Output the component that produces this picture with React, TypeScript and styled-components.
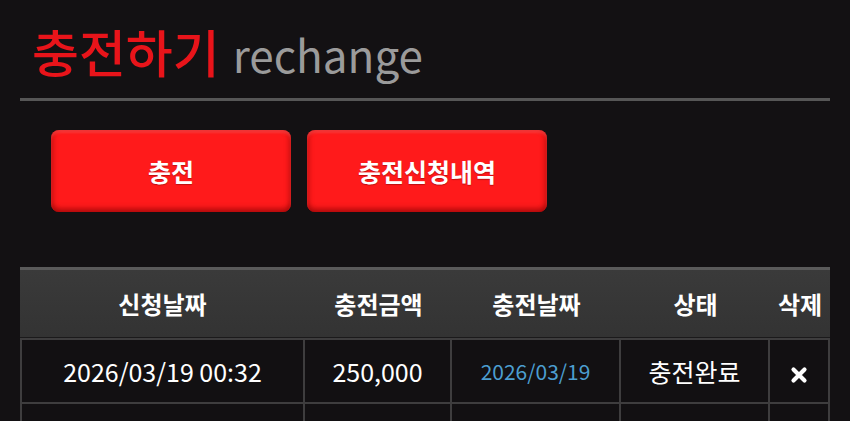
import React from 'react'
import styled, { createGlobalStyle } from 'styled-components'

interface ChargeRecord {
    requestedAt: string,
    amount: number,
    chargedAt: string,
    status: string,
}

const records: ChargeRecord[] = [
    { requestedAt: '2026/03/19 00:32', amount: 250000, chargedAt: '2026/03/19', status: '충전완료' },
]

// the list always shows at least this many rows, empty ones are left blank
const MIN_ROWS = 2

const columns = [
    { label: '신청날짜', width: 285 },
    { label: '충전금액', width: 147 },
    { label: '충전날짜', width: 169 },
    { label: '상태', width: 149 },
    { label: '삭제', width: 60 },
]

const formatAmount = (n: number) => n.toLocaleString('en-US')

const DeleteIcon: React.FC = () => (
    <svg width="18" height="18" viewBox="0 0 18 18">
        <path d="M3.5 3.5 L14.5 14.5 M14.5 3.5 L3.5 14.5" stroke="#fff" strokeWidth="4.2" strokeLinecap="round" />
    </svg>
)

const App: React.FC = () => {
    const blankRows = Math.max(0, MIN_ROWS - records.length)

    return (
        <>
            <GlobalStyle />
            <StyledPage>
                <StyledTitleBar>
                    <StyledTitle>충전하기</StyledTitle>
                    <StyledSubtitle>rechange</StyledSubtitle>
                </StyledTitleBar>

                <StyledButtonRow>
                    <StyledTabButton>충전</StyledTabButton>
                    <StyledTabButton>충전신청내역</StyledTabButton>
                </StyledButtonRow>

                <StyledTable>
                    <colgroup>
                        {columns.map((c) => (
                            <col key={c.label} style={{ width: c.width }} />
                        ))}
                    </colgroup>
                    <thead>
                        <tr>
                            {columns.map((c) => (
                                <StyledHeadCell key={c.label}>{c.label}</StyledHeadCell>
                            ))}
                        </tr>
                    </thead>
                    <tbody>
                        {records.map((r) => (
                            <tr key={r.requestedAt}>
                                <StyledCell>{r.requestedAt}</StyledCell>
                                <StyledCell>{formatAmount(r.amount)}</StyledCell>
                                <StyledCell $tone="date">{r.chargedAt}</StyledCell>
                                <StyledCell>{r.status}</StyledCell>
                                <StyledCell>
                                    <StyledDeleteButton type="button" aria-label="삭제">
                                        <DeleteIcon />
                                    </StyledDeleteButton>
                                </StyledCell>
                            </tr>
                        ))}
                        {Array.from({ length: blankRows }).map((_, i) => (
                            <tr key={`blank-${i}`}>
                                {columns.map((c) => (
                                    <StyledCell key={c.label} />
                                ))}
                            </tr>
                        ))}
                    </tbody>
                </StyledTable>
            </StyledPage>
        </>
    )
}

const GlobalStyle = createGlobalStyle`
    html, body {
        margin: 0;
        padding: 0;
        background: #131113;
        font-family: "Noto Sans CJK KR", "Noto Sans", sans-serif;
        overflow: hidden;
    }
`

const StyledPage = styled.div`
    width: 810px;
    padding: 0 20px;
`

const StyledTitleBar = styled.div`
    display: flex;
    align-items: baseline;
    height: 101px;
    padding-top: 17px;
    padding-left: 12px;
    box-sizing: border-box;
    border-bottom: 3px solid #565656;
`

const StyledTitle = styled.h1`
    margin: 0;
    font-size: 51px;
    line-height: 68px;
    font-weight: 500;
    color: #e8141a;
`

const StyledSubtitle = styled.span`
    margin-left: 13px;
    font-size: 44px;
    font-weight: 400;
    color: #9b9b9b;
`

const StyledButtonRow = styled.div`
    display: flex;
    gap: 16px;
    margin-top: 29px;
    padding-left: 31px;
`

const StyledTabButton = styled.button`
    width: 240px;
    height: 82px;
    border: none;
    border-radius: 8px;
    background: #ff1a1b;
    box-shadow:
        inset 0 3px 3px rgba(255, 120, 120, 0.35),
        inset 0 -4px 5px rgba(120, 0, 0, 0.45),
        inset 3px 0 4px rgba(140, 0, 0, 0.25),
        inset -3px 0 4px rgba(140, 0, 0, 0.25);
    color: #fff;
    font-family: inherit;
    font-size: 25px;
    font-weight: 700;
    text-shadow: 0 1px 1px rgba(90, 0, 0, 0.4);
    cursor: pointer;
`

const StyledTable = styled.table`
    margin-top: 55px;
    width: 810px;
    table-layout: fixed;
    border-collapse: separate;
    border-spacing: 0;
`

const StyledHeadCell = styled.th`
    height: 67px;
    padding: 0;
    background: linear-gradient(#3a3a3a, #333333);
    border-top: 3px solid #5a5a5a;
    border-bottom: 1px solid #1b1a1b;
    color: #fff;
    font-size: 24px;
    font-weight: 700;
    text-align: center;
    vertical-align: middle;
`

const StyledCell = styled.td<{ $tone?: 'date' }>`
    height: 62px;
    padding: 0;
    background: #121012;
    border-right: 2px solid #3e3d3e;
    border-bottom: 2px solid #3e3d3e;
    color: ${(props) => (props.$tone === 'date' ? '#4c9ed0' : '#fff')};
    font-size: ${(props) => (props.$tone === 'date' ? '21px' : '25px')};
    text-align: center;
    vertical-align: middle;

    tbody tr:first-child & {
        border-top: 2px solid #3e3d3e;
    }

    &:first-child {
        border-left: 2px solid #3e3d3e;
    }
`

const StyledDeleteButton = styled.button`
    display: inline-flex;
    padding: 0;
    border: none;
    background: none;
    cursor: pointer;
    vertical-align: middle;
`

export default App
